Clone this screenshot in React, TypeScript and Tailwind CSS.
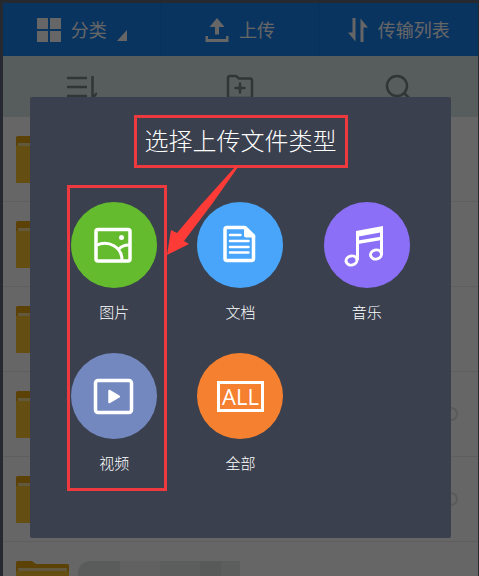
import React from 'react'

const fileTypes = [
  { label: '图片', color: 'bg-[#65bb2e]', icon: <ImageIcon /> },
  { label: '文档', color: 'bg-[#48a5fa]', icon: <DocIcon /> },
  { label: '音乐', color: 'bg-[#8b6ff6]', icon: <MusicIcon /> },
  { label: '视频', color: 'bg-[#7488c0]', icon: <VideoIcon /> },
  {
    label: '全部',
    color: 'bg-[#f5802f]',
    icon: (
      <span className="flex h-[31px] w-[47px] items-center justify-center border-3 border-white font-['Open_Sans',sans-serif] text-[22px] leading-none font-normal">
        ALL
      </span>
    ),
  },
]

const rows = [
  { id: 1, selectable: false },
  { id: 2, selectable: false },
  { id: 3, selectable: false },
  { id: 4, selectable: true },
  { id: 5, selectable: true },
]

function ImageIcon() {
  return (
    <svg viewBox="0 0 86 86" className="size-full" fill="none" stroke="currentColor" strokeWidth="3">
      <rect x="25" y="27.5" width="34" height="31.5" rx="2" strokeWidth="3.5" />
      <path d="M25 43.5C38 37 51 46 51 58M47 48C50 44 54 43 58 43" />
      <circle cx="50.500" cy="35.500" r="2.500" fill="currentColor" stroke="none" />
    </svg>
  )
}

function DocIcon() {
  return (
    <svg viewBox="0 0 86 86" className="size-full" fill="none" stroke="currentColor" strokeWidth="3.5">
      <path d="M48 25.5H30Q28 25.5 28 27.500V56.500Q28 58.500 30 58.500H54.500Q56.500 58.500 56.500 56.500V34" />
      <path d="M47 24H49L58.200 33V35.500H49Q47 35.500 47 33.500Z" fill="currentColor" stroke="none" />
      <path d="M33 33H43.500M33 39H51.500M33 45H51.500M33 50.500H51.500" strokeWidth="2.500" strokeLinecap="round" />
    </svg>
  )
}

function MusicIcon() {
  return (
    <svg viewBox="0 0 86 86" className="size-full" fill="none" stroke="currentColor" strokeWidth="3">
      <path d="M32 29L59 24V30L32 35ZM34 38.500L58 34.500V38L34 42Z" fill="currentColor" stroke="none" />
      <path d="M33.500 30V58M57.500 25V52" />
      <ellipse cx="27.500" cy="58.500" rx="5.500" ry="4.500" transform="rotate(-15 27.500 58.500)" />
      <ellipse cx="52" cy="52.500" rx="5.500" ry="4.500" transform="rotate(-15 52 52.500)" />
    </svg>
  )
}

function VideoIcon() {
  return (
    <svg viewBox="0 0 86 86" className="size-full" fill="none" stroke="currentColor" strokeWidth="3.500">
      <rect x="24.500" y="27.500" width="36" height="32" rx="2.500" />
      <path d="M38.500 38L47.800 43.500L38.500 49Z" fill="currentColor" strokeLinejoin="round" strokeWidth="2.500" />
    </svg>
  )
}

function Folder() {
  return (
    <svg width="53" height="47" viewBox="0 0 53 47" className="shrink-0">
      <path d="M0 1.500Q0 0 1.500 0H16L20 3H51.500Q53 3 53 4.500V45.500Q53 47 51.500 47H1.500Q0 47 0 45.500Z" fill="#e8a512" />
      <path d="M2 7H51V10H2Z" fill="#f5dc9a" />
      <path d="M0 10H53V45.500Q53 47 51.500 47H1.500Q0 47 0 45.500Z" fill="#fac42f" />
    </svg>
  )
}

const tab = 'flex items-center justify-center gap-[10px] text-[18px] text-white'

const App: React.FC = () => {
  return (
    <div className="relative h-screen overflow-hidden border-t-3 border-r border-l-3 border-[#262a30] bg-white font-['Noto_Sans_CJK_SC',sans-serif]">
      <header className="grid h-[53px] grid-cols-3 divide-x divide-[#1878dc] bg-[#1b82f0]">
        <button className={tab}>
          <svg width="24" height="24" viewBox="0 0 24 24" fill="currentColor">
            <path d="M0 0H11V11H0ZM13 0H24V11H13ZM0 13H11V24H0ZM13 13H24V24H13Z" />
          </svg>
          分类
          <svg width="10" height="24" viewBox="0 0 10 24" fill="currentColor">
            <path d="M10 12V23H0Z" />
          </svg>
        </button>
        <button className={tab}>
          <svg width="24" height="24" viewBox="0 0 24 24" fill="currentColor">
            <path d="M12 0L19.500 9H14V16.500H10V9H4.500ZM.5 18H3V21H21V18H23.500V24H.5Z" />
          </svg>
          上传
        </button>
        <button className={tab}>
          <svg width="20" height="24" viewBox="0 0 20 24" fill="currentColor">
            <path d="M4.500 0H7.500V23.500L0 14.500H4.500ZM15.500 24H12.500V.5L20 9.500H15.500Z" />
          </svg>
          传输列表
        </button>
      </header>

      <nav className="grid h-[61px] grid-cols-3 bg-[#dae6e6] text-[#788888]">
        <button className="flex items-center justify-center" aria-label="排序">
          <svg width="30" height="24" viewBox="0 0 30 24" fill="none" stroke="currentColor" strokeWidth="2.500">
            <path d="M0 3H20M0 12H20M0 21H20M25.500 1V23L30 18" />
          </svg>
        </button>
        <button className="flex items-center justify-center" aria-label="新建文件夹">
          <svg width="28" height="26" viewBox="0 0 28 26" fill="none" stroke="currentColor" strokeWidth="2.500">
            <path d="M2 4Q2 2 4 2H10L13 4.500H24Q26 4.500 26 6.500V22Q26 24 24 24H4Q2 24 2 22ZM14 8.500V19.500M8.500 14H19.500" />
          </svg>
        </button>
        <button className="flex items-center justify-center" aria-label="搜索">
          <svg width="28" height="28" viewBox="0 0 28 28" fill="none" stroke="currentColor" strokeWidth="2.500">
            <circle cx="12" cy="13" r="10" />
            <path d="M19 20L26 27" />
          </svg>
        </button>
      </nav>

      <ul>
        {rows.map((row) => (
          <li key={row.id} className="flex h-[85px] items-center justify-between border-b border-[#ececec] pr-[20px] pl-[13px]">
            <Folder />
            {row.selectable && (
              <input
                type="checkbox"
                aria-label="选择文件夹"
                className="size-[14px] appearance-none rounded-full border-2 border-[#e0e0e0]"
              />
            )}
          </li>
        ))}
        <li className="flex h-[85px] items-center gap-[9px] pl-[13px]">
          <Folder />
          <div className="flex h-[48px] overflow-hidden rounded-tl-xl">
            <span className="w-[42px] bg-[#e0e6e6]" />
            <span className="w-[40px] bg-[#eff3f1]" />
            <span className="w-[40px] bg-[#e6ebea]" />
            <span className="w-[21px] bg-[#dbe0df]" />
            <span className="w-[19px] bg-[#e5eae9]" />
          </div>
        </li>
      </ul>

      {/* upload dialog */}
      <div className="absolute inset-0 bg-black/60 pt-[94px] pr-[27px] pl-[27px]">
        <div role="dialog" aria-labelledby="dialog-title" className="relative flex flex-col items-center rounded-xs bg-[#3a404e] px-[21px] pt-[18px] pb-[63px] text-white">
          <h2 id="dialog-title" className="border-3 border-[#ee3a3f] px-[8px] pb-[4px] text-[24px] leading-[43px] font-light">
            选择上传文件类型
          </h2>
          <div className="mt-[34px] grid w-full grid-cols-3 gap-y-[29px]">
            {fileTypes.map((type) => (
              <button key={type.label} className="flex flex-col items-center gap-3 text-[15px] leading-6 font-light">
                <span className={`flex size-[86px] items-center justify-center rounded-full ${type.color}`}>
                  {type.icon}
                </span>
                {type.label}
              </button>
            ))}
          </div>

          {/* highlight frame and pointer */}
          <div className="pointer-events-none absolute top-[88px] left-[37px] h-[306px] w-[100px] border-3 border-[#ee3a3f]" />
          <svg width="72" height="88" viewBox="0 0 72 88" className="pointer-events-none absolute top-[70px] left-[136px]">
            <path d="M72 0L46 37L18 74L23 77L1 88L5 63L11 66L33 40L69 0Z" fill="#ff3b38" />
          </svg>
        </div>
      </div>
    </div>
  )
}

export default App
